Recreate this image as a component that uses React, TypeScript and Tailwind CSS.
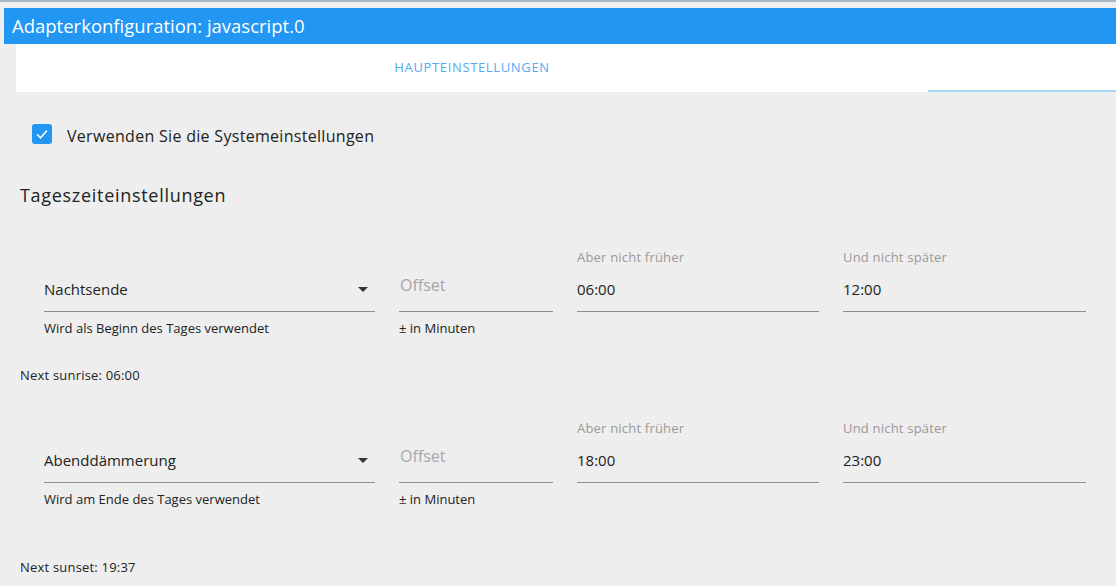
import React from 'react';

const FONT = "font-['Open_Sans','Noto_Sans',sans-serif]";

function Caret() {
  return (
    <svg width="10" height="5" viewBox="0 0 10 5" className="shrink-0">
      <path d="M0 0 L10 0 L5 5 Z" fill="#333" />
    </svg>
  );
}

function SelectField({ value, helper }: { value: string; helper: string }) {
  return (
    <div className="w-[331px] flex flex-col">
      <div className="h-[20px]" />
      <div className="h-[44px] flex items-center justify-between border-b border-[#8d8d8d] pr-[7px]">
        <span className="text-[15px] text-[#222]">{value}</span>
        <Caret />
      </div>
      <div className="mt-[8px] h-[16px] text-[13px] leading-[16px] text-[#222]">{helper}</div>
    </div>
  );
}

function OffsetField() {
  return (
    <div className="w-[154px] flex flex-col">
      <div className="h-[20px]" />
      <div className="h-[44px] flex items-center pb-[10px] border-b border-[#8d8d8d] pl-[1px]">
        <span className="text-[16px] text-[#a6a6a6]">Offset</span>
      </div>
      <div className="mt-[8px] h-[16px] text-[13px] leading-[16px] text-[#222]">± in Minuten</div>
    </div>
  );
}

function TimeField({ label, value, width }: { label: string; value: string; width: string }) {
  return (
    <div className={`${width} flex flex-col`}>
      <div className="h-[20px] flex items-center text-[13px] tracking-[0.2px] text-[#9a9a9a]">{label}</div>
      <div className="h-[44px] flex items-center border-b border-[#8d8d8d]">
        <span className="text-[15px] text-[#222]">{value}</span>
      </div>
    </div>
  );
}

function TimeRow({ select, helper, early, late }: { select: string; helper: string; early: string; late: string }) {
  return (
    <div className="flex items-start gap-[24px] pl-[24px]">
      <SelectField value={select} helper={helper} />
      <OffsetField />
      <TimeField label="Aber nicht früher" value={early} width="w-[242px]" />
      <TimeField label="Und nicht später" value={late} width="w-[243px]" />
    </div>
  );
}

export default function App() {
  return (
    <div className={`w-full h-[586px] bg-[#eeeeee] overflow-hidden ${FONT}`}>
      <div className="h-[2px] bg-[#a7b6c4]" />
      <div className="h-[6px] bg-[#efefef]" />
      <div className="ml-[4px] h-[36px] bg-[#2196f3] text-white text-[18.5px] pl-[8px] flex items-center">
        Adapterkonfiguration: javascript.0
      </div>
      <div className="ml-[16px] h-[48px] bg-white relative flex">
        <div className="w-[912px] flex items-center justify-center text-[13px] text-[#55aaf0] tracking-[0.65px]">
          HAUPTEINSTELLUNGEN
        </div>
        <div className="absolute left-[912px] right-0 bottom-0 h-[2px] bg-[#a8d6f7]" />
      </div>

      <div className="px-[20px]">
        <div className="mt-[32px] h-[20px] flex items-center pl-[12px]">
          <div className="w-[20px] h-[20px] rounded-[3px] bg-[#2196f3] flex items-center justify-center">
            <svg width="14" height="14" viewBox="0 0 24 24">
              <path d="M3.5 12.5 L9.5 18.5 L20.5 6" fill="none" stroke="white" strokeWidth="2.6" />
            </svg>
          </div>
          <span className="ml-[15px] text-[16px] tracking-[0.3px] text-[#222] mt-[3px]">
            Verwenden Sie die Systemeinstellungen
          </span>
        </div>

        <div className="mt-[39px] h-[24px] flex items-center text-[18px] tracking-[0.7px] text-[#222]">
          Tageszeiteinstellungen
        </div>

        <div className="mt-[41px]">
          <TimeRow select="Nachtsende" helper="Wird als Beginn des Tages verwendet" early="06:00" late="12:00" />
        </div>
        <div className="mt-[32px] h-[16px] flex items-center text-[13px] tracking-[0.2px] text-[#222]">
          Next sunrise: 06:00
        </div>

        <div className="mt-[35px]">
          <TimeRow select="Abenddämmerung" helper="Wird am Ende des Tages verwendet" early="18:00" late="23:00" />
        </div>
        <div className="mt-[53px] h-[16px] flex items-center text-[13px] tracking-[0.2px] text-[#222]">
          Next sunset: 19:37
        </div>
      </div>
    </div>
  );
}
